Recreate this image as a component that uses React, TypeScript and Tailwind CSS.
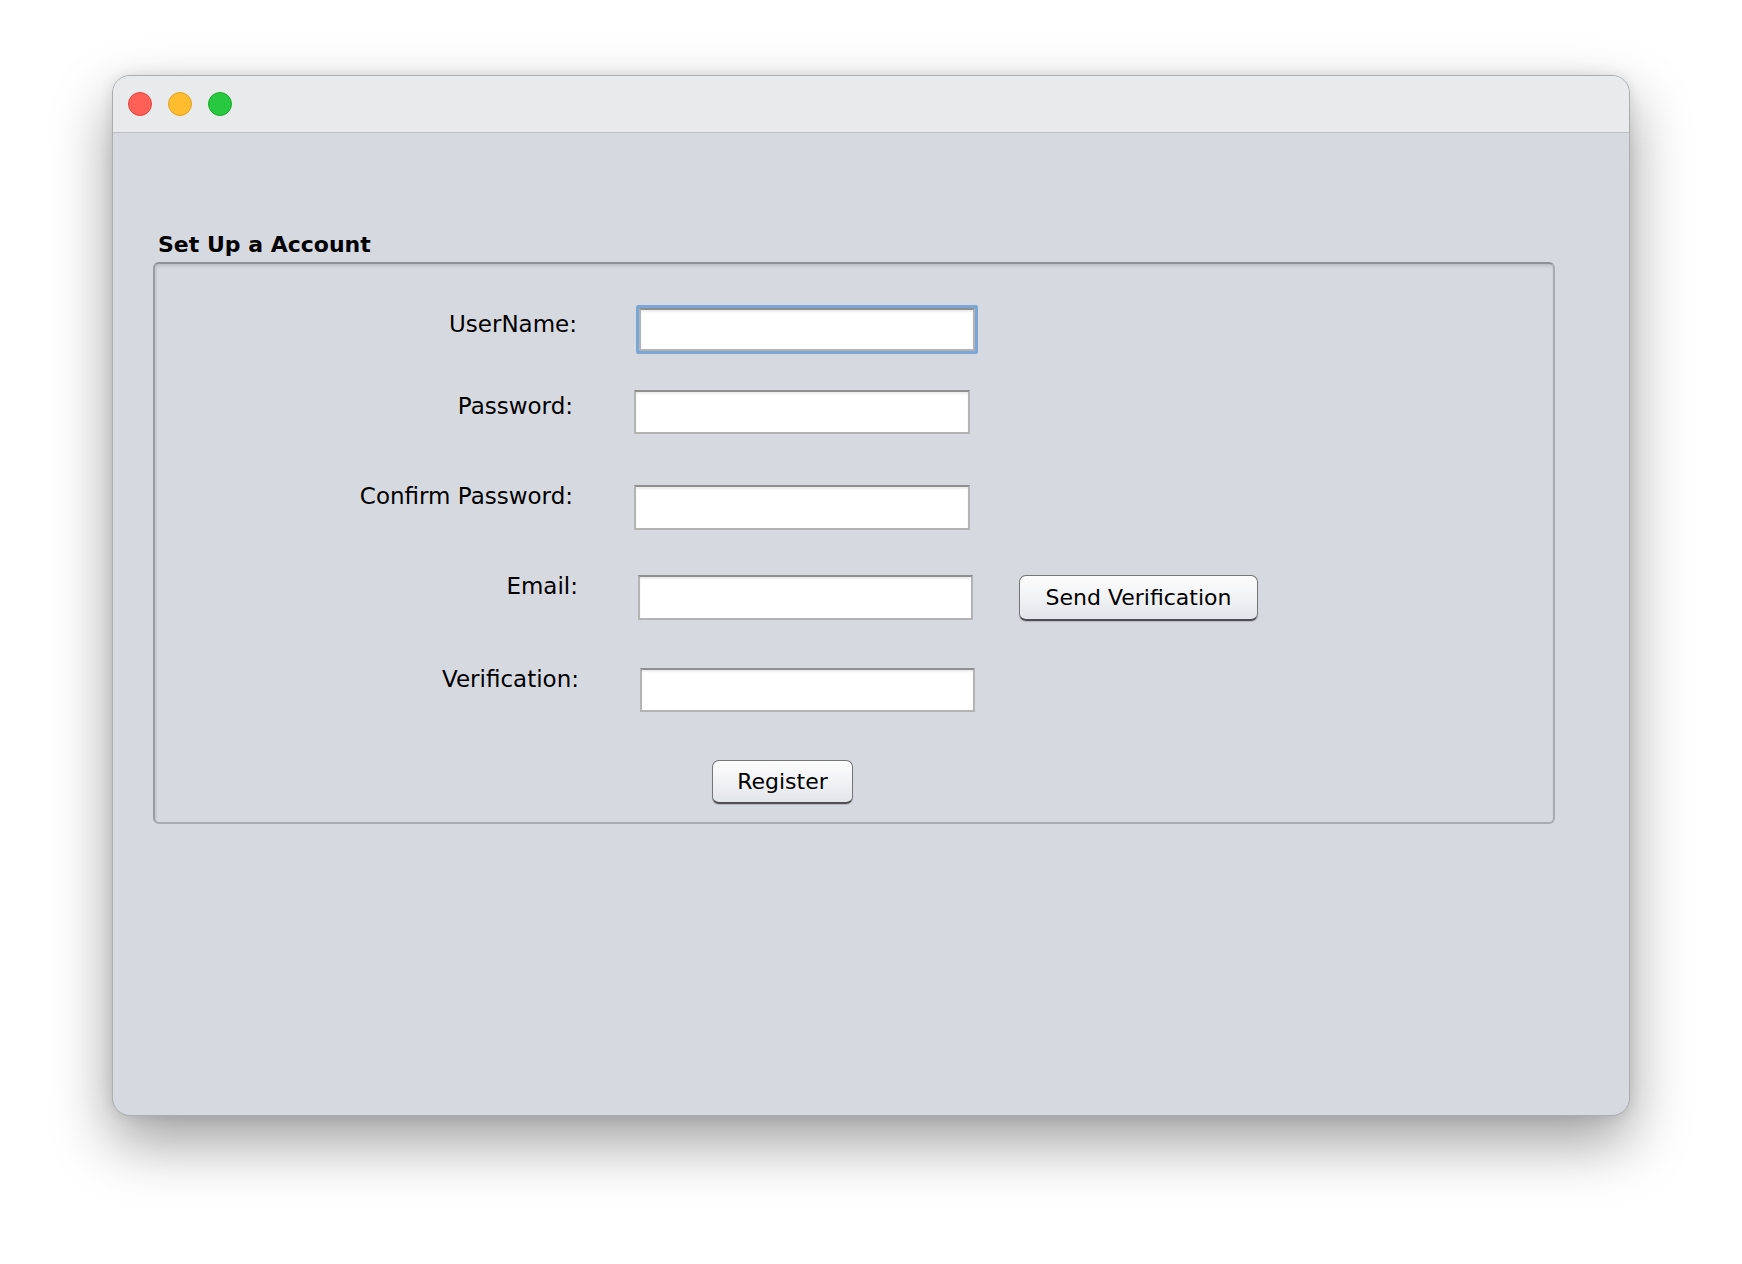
import React from "react"

const labelCls = "text-right text-[23px] leading-[26px] text-black shrink-0"
const fieldCls =
  "bg-white border-2 border-[#b3b3b3] border-t-[#8f8f8f] shadow-[inset_0_2px_2px_rgba(0,0,0,0.08)] outline-none px-2 text-[20px] shrink-0"
const buttonCls =
  "rounded-[7px] border border-[#767676] border-b-2 border-b-[#4f4f4f] bg-gradient-to-b from-[#fdfdfd] via-[#f1f2f4] to-[#e2e5eb] text-[22px] leading-[26px] text-black shadow-[0_1px_1px_rgba(0,0,0,0.15)] shrink-0"

export default function App() {
  return (
    <div
      className="w-full h-[1264px] bg-white pt-[75px] pl-[112px]"
      style={{ fontFamily: '"DejaVu Sans", "Liberation Sans", sans-serif' }}
    >
      <div className="w-[1518px] h-[1041px] rounded-[18px] overflow-hidden border border-[#adadad] bg-[#d6d9e0] shadow-[0_26px_60px_rgba(0,0,0,0.38),0_0_14px_rgba(0,0,0,0.1)] flex flex-col">
        {/* title bar */}
        <div className="h-[57px] shrink-0 bg-[#e9eaec] border-b border-[#bfc0c3] flex items-start pt-[16px] pl-[15px] gap-[16px]">
          <span className="w-[24px] h-[24px] rounded-full bg-[#fe5f57] border border-[#e0443e]" />
          <span className="w-[24px] h-[24px] rounded-full bg-[#febc2e] border border-[#dea123]" />
          <span className="w-[24px] h-[24px] rounded-full bg-[#28c840] border border-[#1aab29]" />
        </div>

        {/* content */}
        <div className="flex flex-col pl-[40px] pt-[99px]">
          <div className="pl-[5px] text-[22px] leading-[26px] font-bold text-black">Set Up a Account</div>
          <div className="mt-[4px] w-[1402px] h-[562px] rounded-[6px] border-2 border-[#a9abb0] border-t-[#8f9196] border-l-[#9a9ca1] shadow-[inset_1px_2px_3px_rgba(0,0,0,0.12)] pt-[41px] flex flex-col">
            {/* UserName */}
            <div className="flex items-start">
              <div className={`${labelCls} w-[422px] mt-[6px]`}>UserName:</div>
              <div className="ml-[59px] w-[342px] h-[49px] border-[3px] border-[#7ba7d7] rounded-[2px] shrink-0 flex">
                <input className={`${fieldCls} w-full h-full`} />
              </div>
            </div>

            {/* Password */}
            <div className="flex items-start mt-[36px]">
              <div className={`${labelCls} w-[418px] mt-[3px]`}>Password:</div>
              <input type="password" className={`${fieldCls} ml-[61px] w-[336px] h-[44px]`} />
            </div>

            {/* Confirm Password */}
            <div className="flex items-start mt-[49px]">
              <div className={`${labelCls} w-[418px]`}>Confirm Password:</div>
              <input type="password" className={`${fieldCls} ml-[61px] mt-[2px] w-[336px] h-[45px]`} />
            </div>

            {/* Email */}
            <div className="flex items-start mt-[43px]">
              <div className={`${labelCls} w-[423px]`}>Email:</div>
              <input className={`${fieldCls} ml-[60px] mt-[2px] w-[335px] h-[45px]`} />
              <button className={`${buttonCls} ml-[46px] mt-[2px] w-[239px] h-[46px]`}>Send Verification</button>
            </div>

            {/* Verification */}
            <div className="flex items-start mt-[45px]">
              <div className={`${labelCls} w-[424px]`}>Verification:</div>
              <input className={`${fieldCls} ml-[61px] mt-[2px] w-[335px] h-[44px]`} />
            </div>

            {/* Register */}
            <div className="flex mt-[48px] pl-[557px]">
              <button className={`${buttonCls} w-[141px] h-[44px]`}>Register</button>
            </div>
          </div>
        </div>
      </div>
    </div>
  )
}
